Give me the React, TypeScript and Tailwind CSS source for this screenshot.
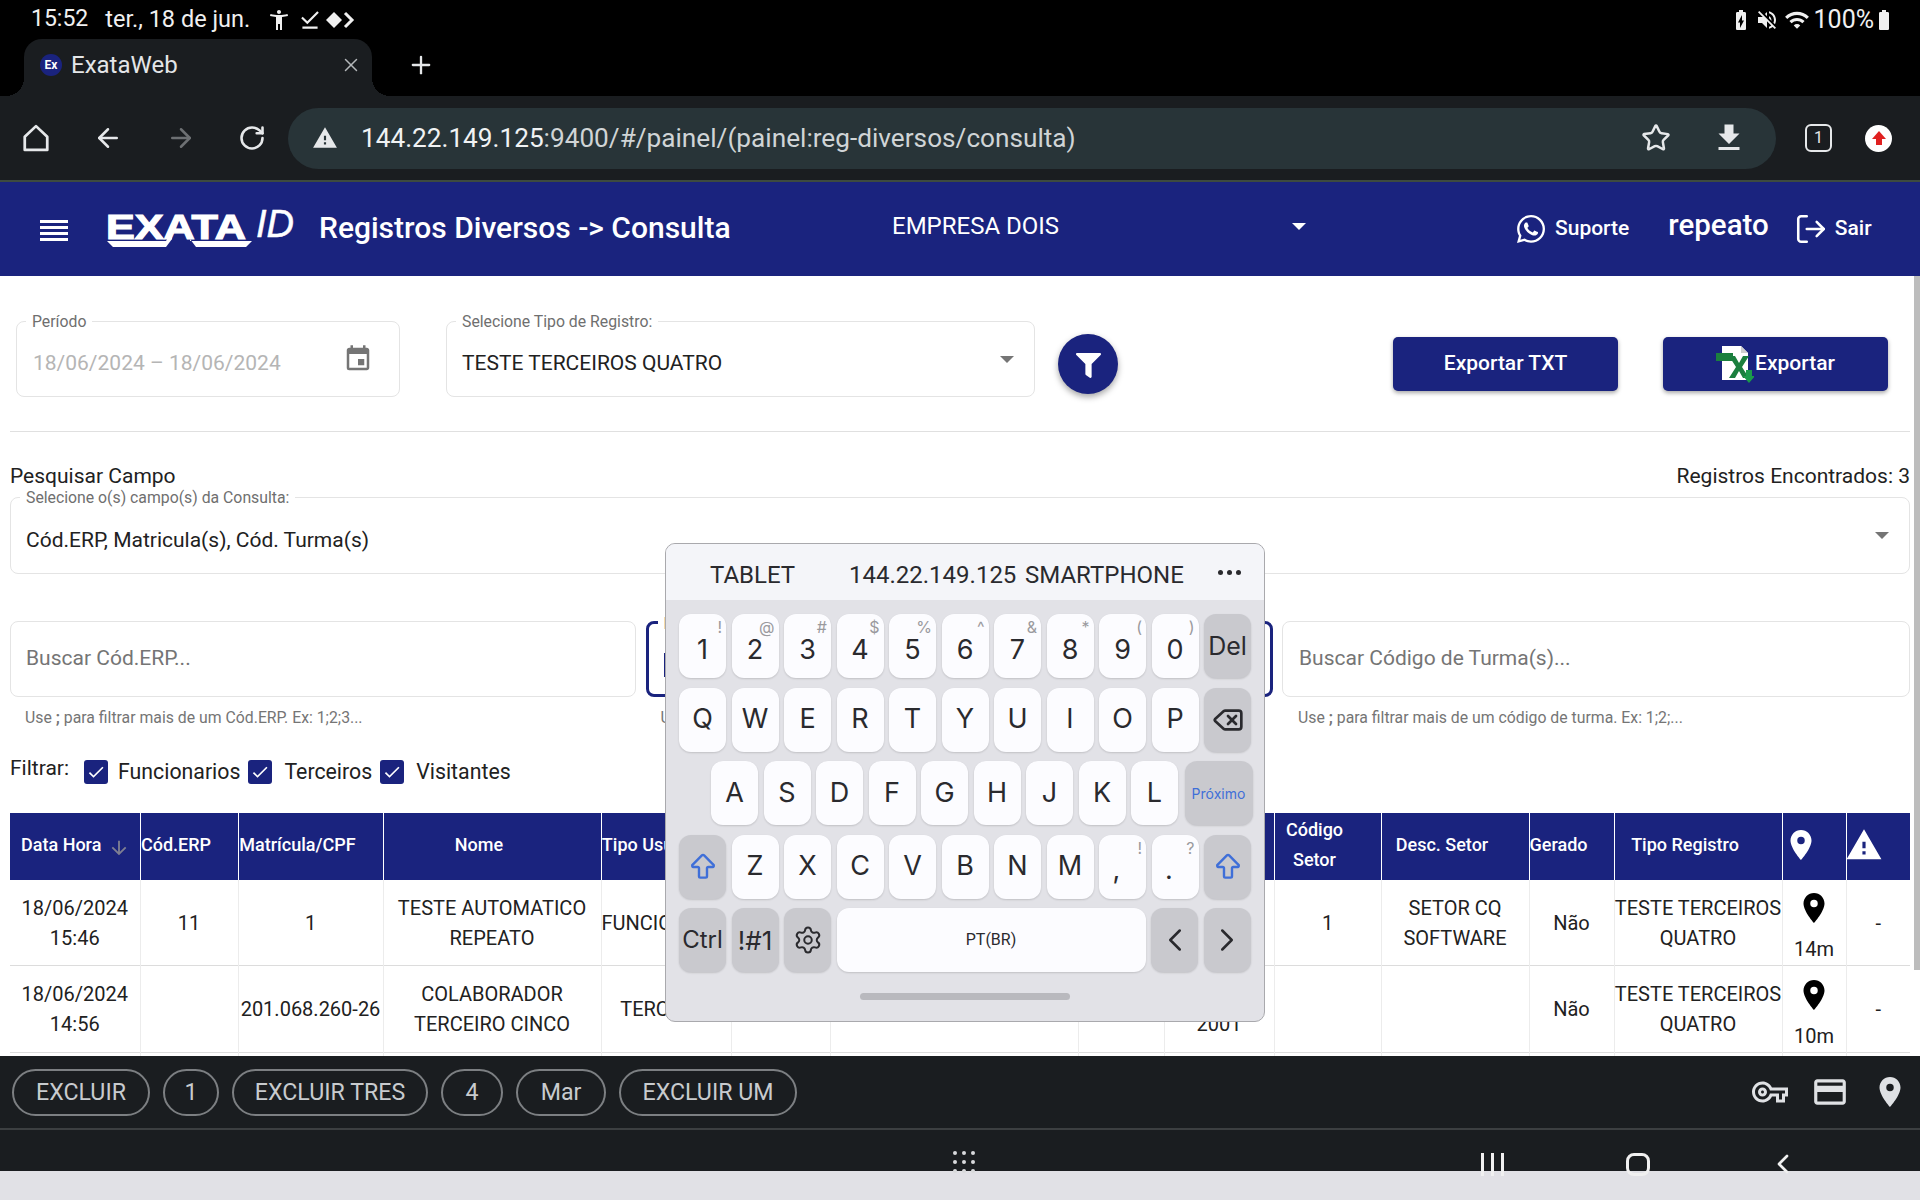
import { ReactNode } from "react";
import { ArrowLeft, ArrowRight, RotateCw, Star, Settings, ChevronLeft, ChevronRight, X, Plus, LogOut, ArrowBigUp, Delete } from "lucide-react";
import { FaWhatsapp, FaFilter } from "react-icons/fa";
import {
  MdAccessibilityNew,
  MdDownloadDone,
  MdBatteryChargingFull,
  MdVolumeOff,
  MdWifi,
  MdBatteryFull,
  MdWarning,
  MdFileDownload,
  MdEvent,
  MdArrowDownward,
  MdLocationOn,
  MdOutlineVpnKey,
  MdOutlineCreditCard,
  MdCheck,
} from "react-icons/md";

const colWidths = [130, 98, 145, 218, 130, 99, 248, 86, 110, 107, 148, 85, 168, 64, 64];

function StatusBar() {
  return (
    <div className="h-[39px] bg-black text-[#f0f0f0] flex items-center text-[23px] pl-[31px] pr-[24px]">
      <span>15:52</span>
      <span className="ml-[17px] text-[23.5px]">ter., 18 de jun.</span>
      <MdAccessibilityNew className="ml-[17px] text-[24px]" />
      <MdDownloadDone className="ml-[6px] text-[26px]" />
      <svg width="30" height="20" viewBox="0 0 30 20" className="ml-[2px]">
        <path d="M9 2l8 8-8 8-8-8z" fill="#f0f0f0" />
        <path d="M20 3l7 7-7 7" fill="none" stroke="#f0f0f0" strokeWidth="3" />
      </svg>
      <div className="ml-auto flex items-center">
        <MdBatteryChargingFull className="text-[24px]" />
        <MdVolumeOff className="ml-[2px] text-[24px]" />
        <MdWifi className="ml-[5px] text-[26px]" />
        <span className="ml-[4px] text-[25px]">100%</span>
        <MdBatteryFull className="text-[24px] -ml-[2px]" />
      </div>
    </div>
  );
}

function TabRow() {
  return (
    <div className="h-[57px] bg-black flex items-end">
      <div className="relative ml-[24px] w-[348px] h-[57px] bg-[#1a1d20] rounded-t-[18px] flex items-center pl-[16px] pr-[10px] pb-[5px] text-[24px] text-[#e4e6e8]">
        <span className="absolute bottom-0 -left-[18px] w-[18px] h-[18px] bg-[radial-gradient(circle_at_0_0,transparent_18px,#1a1d20_18px)]" />
        <span className="absolute bottom-0 -right-[18px] w-[18px] h-[18px] bg-[radial-gradient(circle_at_100%_0,transparent_18px,#1a1d20_18px)]" />
        <span className="w-[22px] h-[22px] rounded-full bg-[#1a237e] text-white text-[12px] font-bold flex items-center justify-center">Ex</span>
        <span className="ml-[9px]">ExataWeb</span>
        <X className="ml-auto text-[#b4b7ba]" size={22} strokeWidth={1.6} />
      </div>
      <Plus className="ml-[35px] mb-[17px] text-[#e4e6e8]" size={28} strokeWidth={2} />
    </div>
  );
}

function Toolbar() {
  return (
    <div className="h-[86px] bg-[#1a1d20] border-b-[2px] border-[#3d4a3f] flex items-center text-[#e6e8ea]">
      <svg width="30" height="30" viewBox="0 0 24 24" className="ml-[21px]" fill="none" stroke="#e6e8ea" strokeWidth="2.2">
        <path d="M12 2.5 21 11v10.5H3V11z" strokeLinejoin="round" />
      </svg>
      <ArrowLeft className="ml-[42px]" size={30} strokeWidth={2} />
      <ArrowRight className="ml-[43px] text-[#6d7073]" size={30} strokeWidth={2} />
      <RotateCw className="ml-[42px]" size={28} strokeWidth={2.2} />
      <div className="ml-[22px] w-[1488px] h-[61px] rounded-full bg-[#283438] flex items-center pl-[24px] pr-[29px]">
        <MdWarning className="text-[26px]" />
        <div className="ml-[23px] mt-[2px] text-[26.2px] text-[#d0d4d6] whitespace-nowrap">
          <span className="text-[#f0f2f3]">144.22.149.125</span>:9400/#/painel/(painel:reg-diversos/consulta)
        </div>
        <Star className="ml-auto" size={30} strokeWidth={2} />
        <MdFileDownload className="ml-[40px] text-[36px]" />
      </div>
      <div className="ml-[29px] w-[27px] h-[28px] rounded-[6px] border-[2px] border-[#e6e8ea] text-[16px] flex items-center justify-center">1</div>
      <div className="ml-[33px] w-[27px] h-[27px] rounded-full bg-white flex items-center justify-center">
        <svg width="16" height="16" viewBox="0 0 16 16">
          <path d="M8 1l7 8h-4v6H5V9H1z" fill="#e02020" />
        </svg>
      </div>
    </div>
  );
}

function Logo() {
  return (
    <svg width="200" height="42" viewBox="0 0 200 42" className="ml-[38px] mr-[-8px] mt-[2px]">
      <text transform="translate(0 30) scale(1.2 1)" fill="#fff" stroke="#fff" strokeWidth="1.2" fontFamily="Liberation Sans" fontWeight="700" fontSize="36">
        EXATA
      </text>
      <text x="150" y="28" fill="#fff" stroke="#fff" strokeWidth="0.5" fontFamily="Liberation Sans" fontStyle="italic" fontSize="38">
        ID
      </text>
      <polygon points="1,32 60,32 66,22 66,30 60,38 7,38" fill="#fff" />
      <polygon points="84,32 146,32 140,38 90,38 84,30" fill="#fff" />
    </svg>
  );
}

function Header() {
  return (
    <div className="h-[94px] bg-[#1a237e] flex items-center text-white">
      <div className="ml-[40px] w-[28px] flex flex-col gap-[3px] mt-[2px]">
        <div className="h-[3px] bg-white" />
        <div className="h-[3px] bg-white" />
        <div className="h-[3px] bg-white" />
        <div className="h-[3px] bg-white" />
      </div>
      <Logo />
      <span className="ml-[21px] mb-[4px] text-[30px] font-medium whitespace-nowrap w-[410px]">Registros Diversos -&gt; Consulta</span>
      <span className="ml-[163px] text-[24px] mb-[7px] w-[399px]">EMPRESA DOIS</span>
      <span className="w-0 h-0 border-x-[7px] border-t-[7px] border-x-transparent border-t-white mb-[5px] ml-[1px]" />
      <FaWhatsapp className="ml-[209px] text-[32px]" />
      <span className="ml-[8px] text-[21px] font-medium">Suporte</span>
      <span className="ml-[39px] text-[29.5px] font-medium mb-[7px]">repeato</span>
      <LogOut className="ml-[25px]" size={34} strokeWidth={1.8} />
      <span className="ml-[7px] text-[21px] font-medium">Sair</span>
    </div>
  );
}

function Field({ label, className, children }: { label?: string; className: string; children: ReactNode }) {
  return (
    <div className={`relative border border-[#e4e4e4] rounded-[8px] flex items-center bg-white ${className}`}>
      {label && <span className="absolute -top-[9px] left-[9px] px-[6px] bg-white text-[15.8px] leading-[18px] text-[#6f6f6f] whitespace-nowrap">{label}</span>}
      {children}
    </div>
  );
}

function FilterForm() {
  return (
    <div className="px-[10px] pt-[45px]">
      <div className="flex items-start">
        <Field label="Período" className="ml-[6px] w-[384px] h-[76px] pl-[16px] pr-[26px]">
          <span className="text-[21px] text-[#b5b5b5] mt-[9px]">18/06/2024 – 18/06/2024</span>
          <MdEvent className="ml-auto text-[30px] text-[#757575]" />
        </Field>
        <Field label="Selecione Tipo de Registro:" className="ml-[46px] w-[589px] h-[76px] pl-[15px] pr-[20px]">
          <span className="text-[21px] text-[#212121] mt-[9px]">TESTE TERCEIROS QUATRO</span>
          <span className="ml-auto w-0 h-0 border-x-[7px] border-t-[7px] border-x-transparent border-t-[#757575]" />
        </Field>
        <button className="ml-[23px] mt-[13px] w-[60px] h-[60px] rounded-full bg-[#1a237e] text-white flex items-center justify-center shadow-[0_3px_6px_rgba(0,0,0,0.35)]">
          <FaFilter className="text-[25px] mt-[2px]" />
        </button>
        <button className="ml-auto mt-[16px] w-[225px] h-[54px] rounded-[5px] bg-[#1a237e] text-white text-[21px] font-medium shadow-[0_2px_4px_rgba(0,0,0,0.35)]">Exportar TXT</button>
        <button className="ml-[45px] mr-[22px] mt-[16px] w-[225px] h-[54px] rounded-[5px] bg-[#1a237e] text-white text-[21px] font-medium shadow-[0_2px_4px_rgba(0,0,0,0.35)] flex items-center justify-center">
          <svg width="38" height="38" viewBox="0 0 38 38">
            <path d="M6 1h19l7 7v27H6z" fill="#fff" />
            <path d="M25 1v7h7z" fill="#cfcfcf" />
            <path d="M13 11h6l4 7 4-7h6l-7 11 7 11h-6l-4-7-4 7h-6l7-11z" fill="#1b7f3e" />
            <rect x="0" y="8" width="17" height="8" fill="#1b7f3e" />
            <path d="M30 25h6v6h3l-6 7-6-7h3z" fill="#1b9a4a" />
          </svg>
          <span className="ml-[1px]">Exportar</span>
        </button>
      </div>
      <div className="h-px bg-[#e0e0e0] mt-[34px]" />
      <div className="flex justify-between mt-[32px] text-[21px] leading-[24px] text-[#212121]">
        <span>Pesquisar Campo</span>
        <span>Registros Encontrados: 3</span>
      </div>
      <Field label="Selecione o(s) campo(s) da Consulta:" className="mt-[9px] h-[77px] pl-[15px] pr-[20px]">
        <span className="text-[21px] text-[#212121] mt-[10px]">Cód.ERP, Matricula(s), Cód. Turma(s)</span>
        <span className="ml-auto w-0 h-0 border-x-[7px] border-t-[7px] border-x-transparent border-t-[#757575]" />
      </Field>
      <div className="mt-[47px] grid grid-cols-[626px_627px_628px] gap-x-[9.5px]">
        <Field className="h-[76px] pl-[15px]">
          <span className="text-[21px] text-[#757575]">Buscar Cód.ERP...</span>
        </Field>
        <Field label="Buscar Matrícula(s)" className="h-[76px] pl-[15px] !border-[3px] !border-[#1a237e]">
          <div className="w-[3px] h-[24px] bg-[#1a237e] mt-[12px]" />
        </Field>
        <Field className="h-[76px] pl-[16px]">
          <span className="text-[21px] text-[#757575]">Buscar Código de Turma(s)...</span>
        </Field>
        <p className="mt-[11px] pl-[15px] text-[15.8px] leading-[20px] text-[#757575]">Use <b>;</b> para filtrar mais de um Cód.ERP. Ex: 1;2;3...</p>
        <p className="mt-[11px] pl-[15px] text-[15.8px] leading-[20px] text-[#757575]">Use <b>;</b> para filtrar mais de uma matrícula. Ex: 1;2;3...</p>
        <p className="mt-[11px] pl-[16px] text-[15.8px] leading-[20px] text-[#757575]">Use <b>;</b> para filtrar mais de um código de turma. Ex: 1;2;...</p>
      </div>
      <div className="mt-[32px] flex items-center h-[24px] text-[21.3px] text-[#212121]">
        <span className="mb-[6px] text-[21px]">Filtrar:</span>
        <Check className="ml-[15px]" />
        <span className="ml-[10px]">Funcionarios</span>
        <Check className="ml-[8px]" />
        <span className="ml-[12px]">Terceiros</span>
        <Check className="ml-[8px]" />
        <span className="ml-[12px]">Visitantes</span>
      </div>
    </div>
  );
}

function Check({ className }: { className: string }) {
  return (
    <span className={`w-[24px] h-[24px] rounded-[3px] bg-[#1a237e] text-white flex items-center justify-center ${className}`}>
      <MdCheck className="text-[20px]" />
    </span>
  );
}

const headers: ReactNode[] = [
  null,
  "Cód.ERP",
  "Matrícula/CPF",
  "Nome",
  "Tipo Usuário",
  "",
  "",
  "",
  "",
  <>Código<br />Setor</>,
  "Desc. Setor",
  "Gerado",
  "Tipo Registro",
  <MdLocationOn key="pin" className="text-[36px] inline-block" />,
  <MdWarning key="warn" className="text-[38px] inline-block -ml-[2px]" />,
];

const rows: ReactNode[][] = [
  [
    <>18/06/2024<br />15:46</>,
    "11",
    "1",
    <>TESTE AUTOMATICO<br />REPEATO</>,
    "FUNCIONARIO",
    "",
    "",
    "",
    "",
    "1",
    <>SETOR CQ<br />SOFTWARE</>,
    "Não",
    <>TESTE TERCEIROS<br />QUATRO</>,
    "14m",
    "-",
  ],
  [
    <>18/06/2024<br />14:56</>,
    "",
    "201.068.260-26",
    <>COLABORADOR<br />TERCEIRO CINCO</>,
    "TERCEIRO",
    "",
    "",
    "",
    <>&nbsp;<br />2001</>,
    "",
    "",
    "Não",
    <>TESTE TERCEIROS<br />QUATRO</>,
    "10m",
    "-",
  ],
];

function DataTable() {
  return (
    <div className="px-[10px] mt-[29px]">
      <table className="table-fixed w-[1900px] border-collapse text-[20px] leading-[30px] text-[#212121]">
        <colgroup>
          {colWidths.map((w, i) => (
            <col key={i} style={{ width: w }} />
          ))}
        </colgroup>
        <thead>
          <tr className="h-[67px] bg-[#1a237e] text-white text-[18px] leading-[30px] font-medium">
            {headers.map((h, i) => (
              <th key={i} className={`font-medium border-l border-white first:border-l-0 p-0 pb-[3px] whitespace-nowrap text-center ${i === 0 ? "" : "pr-[26px]"}`}>
                {i === 0 ? (
                  <div className="flex items-center pl-[11px]">
                    Data Hora
                    <MdArrowDownward className="ml-[7px] mt-[6px] text-[22px] text-[#7f7f92]" />
                  </div>
                ) : (
                  h
                )}
              </th>
            ))}
          </tr>
        </thead>
        <tbody>
          {rows.map((row, r) => (
            <tr key={r} className={`border-b border-[#dcdcdc] ${r === 0 ? "h-[85px]" : "h-[87px]"}`}>
              {row.map((c, i) => (
                <td key={i} className="border-l border-[#ececec] first:border-l-0 p-0 text-center whitespace-nowrap">
                  {i === 13 ? (
                    <div className="flex flex-col items-center h-[85px] pt-[10px] overflow-visible">
                      <MdLocationOn className="text-[36px] text-black shrink-0" />
                      <span className="mt-[8px]">{c}</span>
                    </div>
                  ) : (
                    c
                  )}
                </td>
              ))}
            </tr>
          ))}
          <tr className="h-[20px]">
            {colWidths.map((_, i) => (
              <td key={i} className="border-l border-[#ececec] first:border-l-0 p-0" />
            ))}
          </tr>
        </tbody>
      </table>
    </div>
  );
}

function Key({ children, sup, fn, className = "" }: { children: ReactNode; sup?: string; fn?: boolean; className?: string }) {
  return (
    <div className={`relative h-[64px] rounded-[12px] flex items-center justify-center text-[27px] text-[#2a2a2e] shadow-[0_1px_2px_rgba(0,0,0,0.15)] ${fn ? "bg-[#c9c9ce]" : "bg-[#fcfcff]"} ${className || "w-[47px]"}`}>
      {sup && <span className="absolute top-[3px] right-[4px] text-[16px] leading-[20px] text-[#9a9a9e]">{sup}</span>}
      {children}
    </div>
  );
}

function Keyboard() {
  const digits = [["1", "!"], ["2", "@"], ["3", "#"], ["4", "$"], ["5", "%"], ["6", "^"], ["7", "&"], ["8", "*"], ["9", "("], ["0", ")"]];
  return (
    <div className="absolute left-[665px] top-[543px] w-[600px] h-[479px] rounded-[10px] border border-[#a9a9ad] bg-[#e2e2e7] overflow-hidden font-[Inter,Roboto,sans-serif]">
      <div className="h-[56px] bg-[#f4f5f9] relative text-[24px] text-[#2a2a2e] font-[Roboto,sans-serif]">
        <span className="absolute left-[44px] top-[13px]">TABLET</span>
        <span className="absolute left-[183px] top-[13px]">144.22.149.125</span>
        <span className="absolute left-[359px] top-[13px]">SMARTPHONE</span>
        <span className="absolute left-[552px] top-[26px] flex gap-[4px]">
          <i className="w-[5px] h-[5px] rounded-full bg-[#2a2a2e]" />
          <i className="w-[5px] h-[5px] rounded-full bg-[#2a2a2e]" />
          <i className="w-[5px] h-[5px] rounded-full bg-[#2a2a2e]" />
        </span>
      </div>
      <div className="pl-[13px] pt-[14px] flex flex-col gap-[9.5px]">
        <div className="flex gap-[5.5px]">
          {digits.map(([d, s]) => (
            <Key key={d} sup={s}>
              <span className="mt-[8px]">{d}</span>
            </Key>
          ))}
          <Key fn><span className="mt-[2px] text-[25px]">Del</span></Key>
        </div>
        <div className="flex gap-[5.5px]">
          {"QWERTYUIOP".split("").map((k) => (
            <Key key={k}>{k}</Key>
          ))}
          <Key fn>
            <Delete size={32} strokeWidth={2} />
          </Key>
        </div>
        <div className="flex gap-[5.5px] pl-[32px]">
          {"ASDFGHJKL".split("").map((k) => (
            <Key key={k}>{k}</Key>
          ))}
          <Key fn className="w-[68px] ml-[1px]">
            <span className="text-[14px] text-[#3f6fd8]">Próximo</span>
          </Key>
        </div>
        <div className="flex gap-[5.5px]">
          <Key fn>
            <ArrowBigUp className="text-[#3f6fd8]" size={32} strokeWidth={1.8} />
          </Key>
          {"ZXCVBNM".split("").map((k) => (
            <Key key={k}>{k}</Key>
          ))}
          <Key sup="!"><span className="mr-[12px] mt-[8px]">,</span></Key>
          <Key sup="?"><span className="mr-[12px] mt-[8px]">.</span></Key>
          <Key fn>
            <ArrowBigUp className="text-[#3f6fd8]" size={32} strokeWidth={1.8} />
          </Key>
        </div>
        <div className="flex gap-[5.5px]">
          <Key fn><span className="text-[24px]">Ctrl</span></Key>
          <Key fn><span className="text-[26px]">!#1</span></Key>
          <Key fn>
            <Settings size={30} strokeWidth={1.6} />
          </Key>
          <Key className="w-[309px]">
            <span className="text-[16px] font-[Roboto,sans-serif]">PT(BR)</span>
          </Key>
          <Key fn>
            <ChevronLeft size={38} strokeWidth={1.6} />
          </Key>
          <Key fn>
            <ChevronRight size={38} strokeWidth={1.6} />
          </Key>
        </div>
      </div>
      <div className="mt-[21px] ml-[194px] w-[210px] h-[7px] rounded-full bg-[#b9b9be]" />
    </div>
  );
}

function BottomBars() {
  const chips = [
    ["EXCLUIR", "w-[138px]"],
    ["1", "w-[56px]"],
    ["EXCLUIR TRES", "w-[196px]"],
    ["4", "w-[62px]"],
    ["Mar", "w-[90px]"],
    ["EXCLUIR UM", "w-[178px]"],
  ];
  return (
    <>
      <div className="h-[72px] bg-[#1a1d20] flex items-center pl-[12px] pr-[12px]">
        <div className="flex gap-[13px]">
          {chips.map(([c, w]) => (
            <div key={c} className={`h-[47px] rounded-full border-[2px] border-[#7c7f82] text-[23.2px] text-[#c8cbce] flex items-center justify-center ${w}`}>
              {c}
            </div>
          ))}
        </div>
        <MdOutlineVpnKey className="ml-auto text-[36px] text-[#dfe1e4]" />
        <MdOutlineCreditCard className="ml-[23px] text-[38px] text-[#dfe1e4]" />
        <MdLocationOn className="ml-[23px] text-[36px] text-[#dfe1e4]" />
      </div>
      <div className="h-[2px] bg-[#3c3f41]" />
      <div className="h-[41px] bg-[#1a1d20]" />
      <div className="h-[29px] bg-[#e1e1e6]" />
    </>
  );
}

function NavIcons() {
  return (
    <>
      <div className="absolute left-[953px] top-[1151px] grid grid-cols-3 gap-[5px]">
        {Array.from({ length: 9 }).map((_, i) => (
          <i key={i} className="w-[4px] h-[4px] rounded-full bg-[#d8dadc]" />
        ))}
      </div>
      <div className="absolute left-[1481px] top-[1153px] flex gap-[7px]">
        <i className="w-[3px] h-[23px] bg-[#f0f0f0]" />
        <i className="w-[3px] h-[23px] bg-[#f0f0f0]" />
        <i className="w-[3px] h-[23px] bg-[#f0f0f0]" />
      </div>
      <div className="absolute left-[1626px] top-[1153px] w-[24px] h-[23px] rounded-[8px] border-[3px] border-[#f0f0f0]" />
      <ChevronLeft className="absolute left-[1767px] top-[1148px] text-[#f0f0f0]" size={32} strokeWidth={2} />
    </>
  );
}

export default function App() {
  return (
    <div className="relative w-[1920px] h-[1200px] overflow-hidden bg-white font-[Roboto,sans-serif]">
      <StatusBar />
      <TabRow />
      <Toolbar />
      <Header />
      <div className="h-[780px] overflow-hidden bg-white">
        <FilterForm />
        <DataTable />
      </div>
      <BottomBars />
      <Keyboard />
      <NavIcons />
      <div className="absolute left-[1914px] top-[276px] w-[6px] h-[694px] bg-[#bdbdbd]" />
    </div>
  );
}
